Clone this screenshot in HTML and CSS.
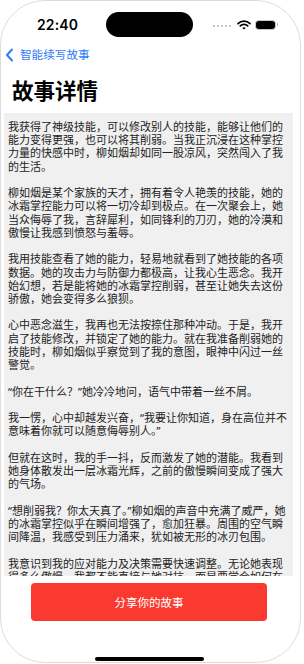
FILE: index.html
```html
<!DOCTYPE html>
<html lang="zh">
<head>
<meta charset="utf-8">
<title>故事详情</title>
<link rel="stylesheet" href="styles.css">
</head>
<body>
<div class="device">
  <div class="status-bar">
    <div class="time">22:40</div>
    <div class="island"></div>
    <div class="status-icons">
      <span class="dots"><i></i><i></i><i></i><i></i><i></i></span>
      <svg class="wifi" width="14" height="10" viewBox="0 0 14 10">
        <path d="M1 3.6 A8.5 8.5 0 0 1 13 3.6" fill="none" stroke="#000" stroke-width="1.8" stroke-linecap="round"/>
        <path d="M3.3 5.9 A5.2 5.2 0 0 1 10.7 5.9" fill="none" stroke="#000" stroke-width="1.8" stroke-linecap="round"/>
        <path d="M5.3 8 L7 9.6 L8.7 8 A2.4 2.4 0 0 0 5.3 8 Z" fill="#000"/>
      </svg>
      <span class="battery"><span class="battery-body"></span><span class="battery-nub"></span></span>
    </div>
  </div>
  <div class="nav-back">
    <svg class="chevron" width="9" height="14" viewBox="0 0 9 14">
      <path d="M7 1.5 L2 7 L7 12.5" fill="none" stroke="#2f7cf6" stroke-width="2" stroke-linecap="round" stroke-linejoin="round"/>
    </svg>
    <span class="back-label">智能续写故事</span>
  </div>
  <h1 class="title">故事详情</h1>
  <div class="story-box">
    <p>我获得了神级技能，可以修改别人的技能，能够让他们的能力变得更强，也可以将其削弱。当我正沉浸在这种掌控力量的快感中时，柳如烟却如同一股凉风，突然闯入了我的生活。</p>
    <p>柳如烟是某个家族的天才，拥有着令人艳羡的技能，她的冰霜掌控能力可以将一切冷却到极点。在一次聚会上，她当众侮辱了我，言辞犀利，如同锋利的刀刃，她的冷漠和傲慢让我感到愤怒与羞辱。</p>
    <p>我用技能查看了她的能力，轻易地就看到了她技能的各项数据。她的攻击力与防御力都极高，让我心生恶念。我开始幻想，若是能将她的冰霜掌控削弱，甚至让她失去这份骄傲，她会变得多么狼狈。</p>
    <p>心中恶念滋生，我再也无法按捺住那种冲动。于是，我开启了技能修改，并锁定了她的能力。就在我准备削弱她的技能时，柳如烟似乎察觉到了我的意图，眼神中闪过一丝警觉。</p>
    <p>“你在干什么？”她冷冷地问，语气中带着一丝不屑。</p>
    <p>我一愣，心中却越发兴奋，“我要让你知道，身在高位并不意味着你就可以随意侮辱别人。”</p>
    <p>但就在这时，我的手一抖，反而激发了她的潜能。我看到她身体散发出一层冰霜光辉，之前的傲慢瞬间变成了强大的气场。</p>
    <p>“想削弱我？你太天真了。”柳如烟的声音中充满了威严，她的冰霜掌控似乎在瞬间增强了，愈加狂暴。周围的空气瞬间降温，我感受到压力涌来，犹如被无形的冰刃包围。</p>
    <p>我意识到我的应对能力及决策需要快速调整。无论她表现得多么傲慢，我都不能直接与她对抗，而是要学会如何在这场较量中找到她的破绽。</p>
  </div>
  <button class="share-btn">分享你的故事</button>
  <div class="home-indicator"></div>
</div>
</body>
</html>
```

FILE: styles.css
```css
* {
  box-sizing: border-box;
}

html, body {
  margin: 0;
  padding: 0;
  background: #ffffff;
}

body {
  font-family: "Noto Sans", "Noto Sans CJK SC", sans-serif;
  width: 304px;
  height: 664px;
  overflow: hidden;
}

.device {
  width: 301px;
  height: 663px;
  border: 1px solid #dcdcdc;
  border-radius: 45px;
  background: #ffffff;
  overflow: hidden;
  display: flex;
  flex-direction: column;
}

.status-bar {
  height: 46px;
  display: flex;
  align-items: center;
  padding-left: 36px;
}

.time {
  width: 69px;
  font-family: "Inter", "Noto Sans", sans-serif;
  font-weight: 600;
  font-size: 14px;
  color: #000;
  letter-spacing: 0.1px;
}

.island {
  width: 87px;
  height: 25px;
  border-radius: 13px;
  background: #000;
}

.status-icons {
  display: flex;
  align-items: center;
  margin-left: 20px;
  margin-top: 1px;
}

.dots {
  display: flex;
  gap: 2px;
  margin-top: 3px;
}

.dots i {
  display: block;
  width: 2px;
  height: 2px;
  border-radius: 50%;
  background: #b5b5b5;
}

.wifi {
  margin-left: 6px;
}

.battery {
  display: flex;
  align-items: center;
  margin-left: 5px;
}

.battery-body {
  width: 19px;
  height: 8px;
  border-radius: 3px;
  background: #000;
  box-shadow: 0 0 0 1px #c8c8c8;
}

.battery-nub {
  width: 1.5px;
  height: 3px;
  margin-left: 1.5px;
  border-radius: 0 1px 1px 0;
  background: #b0b0b0;
}

.nav-back {
  height: 16px;
  display: flex;
  align-items: center;
  padding-left: 4px;
}

.chevron {
  display: block;
}

.back-label {
  margin-left: 6px;
  font-size: 11.6px;
  color: #2f7cf6;
  line-height: 16px;
}

.title {
  margin: 14px 0 0 11px;
  height: 28px;
  font-size: 21.5px;
  line-height: 28px;
  font-weight: 700;
  color: #000;
}

.story-box {
  margin: 8px 7px 0 3px;
  height: 463px;
  background: #f0f0f0;
  padding: 7px 5px 0 4px;
  overflow: hidden;
  font-size: 11px;
  line-height: 13.23px;
  color: #222;
}

.story-box p {
  margin: 0 0 13.23px 0;
}

.share-btn {
  margin: 7px 0 0 30px;
  width: 236px;
  height: 38px;
  border: none;
  border-radius: 4px;
  background: #fa3a30;
  color: #fff;
  font-family: "Noto Sans", "Noto Sans CJK SC", sans-serif;
  font-size: 11.5px;
  padding: 0;
}

.home-indicator {
  margin: 36px 0 0 94px;
  width: 109px;
  height: 4px;
  border-radius: 2px;
  background: #000;
}
```
